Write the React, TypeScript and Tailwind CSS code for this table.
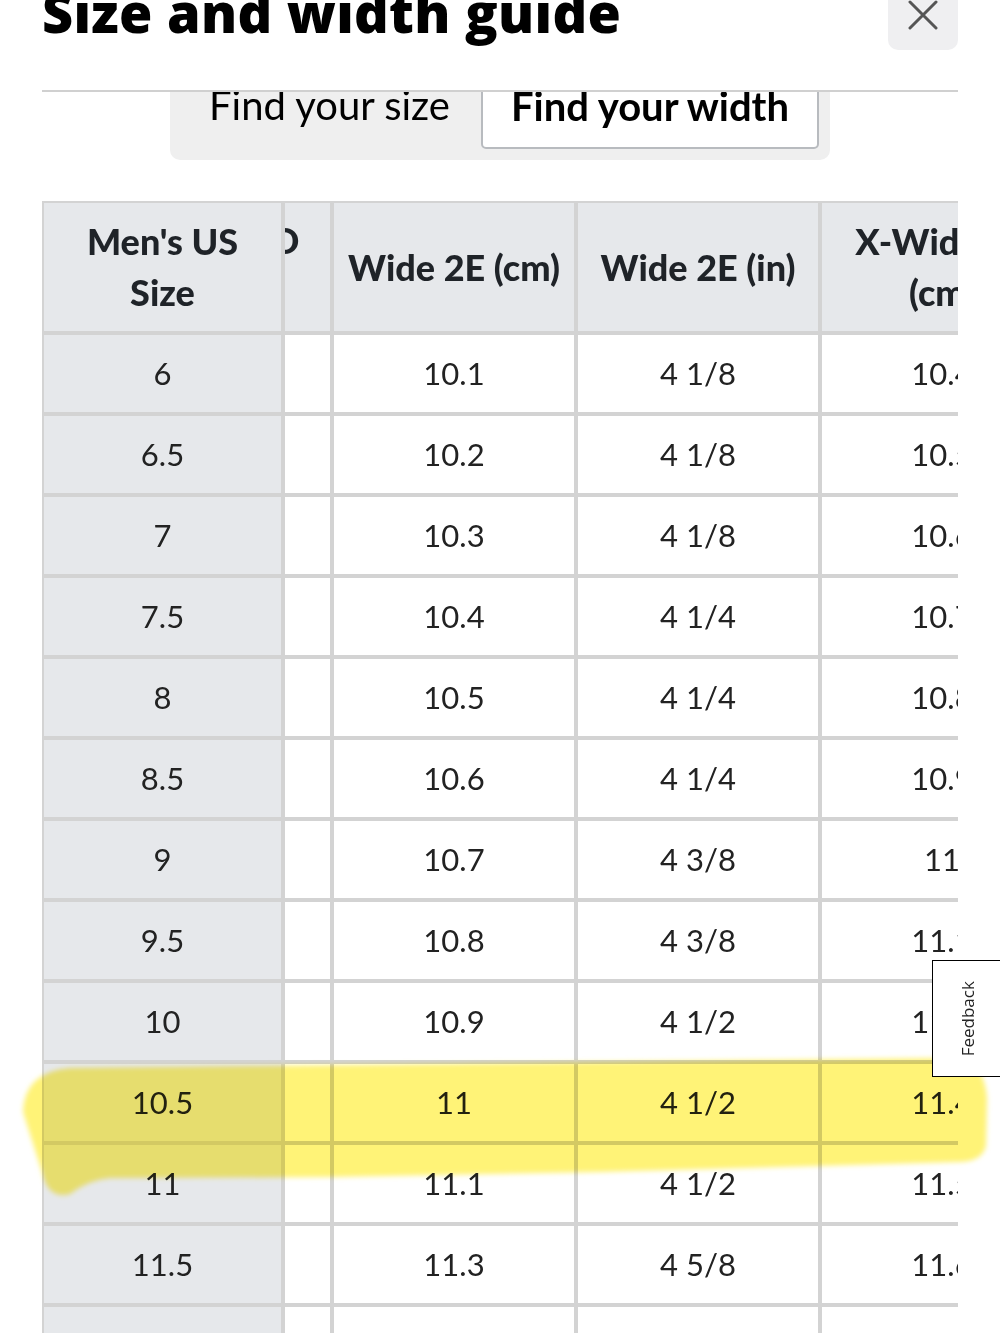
import React from "react";

const rows: [string, string, string, string][] = [
  ["6", "10.1", "4 1/8", "10.4"],
  ["6.5", "10.2", "4 1/8", "10.5"],
  ["7", "10.3", "4 1/8", "10.6"],
  ["7.5", "10.4", "4 1/4", "10.7"],
  ["8", "10.5", "4 1/4", "10.8"],
  ["8.5", "10.6", "4 1/4", "10.9"],
  ["9", "10.7", "4 3/8", "11"],
  ["9.5", "10.8", "4 3/8", "11.1"],
  ["10", "10.9", "4 1/2", "11.2"],
  ["10.5", "11", "4 1/2", "11.4"],
  ["11", "11.1", "4 1/2", "11.5"],
  ["11.5", "11.3", "4 5/8", "11.6"],
  ["12", "11.4", "4 5/8", "11.7"],
];

const font = { fontFamily: "Lato, 'Open Sans', sans-serif" };

export default function App() {
  return (
    <div className="relative w-[1000px] h-[1333px] overflow-hidden bg-white text-[#222]" style={font}>
      {/* Header */}
      <div className="mx-[42px] h-[92px] border-b-2 border-[#d0d0d0] flex justify-between items-start">
        <h1
          className="text-[54px] font-extrabold leading-none mt-[-15px] tracking-[0.3px] text-black whitespace-nowrap"
          style={{ fontFamily: "'Open Sans', Lato, sans-serif" }}
        >
          Size and width guide
        </h1>
        <button className="w-[70px] h-[70px] mt-[-20px] rounded-[10px] bg-[#efeff1] flex items-end justify-center pb-[19px]">
          <svg width="32" height="32" viewBox="0 0 32 32" fill="none" stroke="#555" strokeWidth="3" strokeLinecap="round">
            <path d="M3 3 L29 29 M29 3 L3 29" />
          </svg>
        </button>
      </div>

      {/* Tabs */}
      <div className="h-[68px] overflow-hidden flex justify-center items-end">
        <div className="flex items-end gap-[3px] bg-[#efefef] rounded-b-[10px] px-[11px] pb-[11px] w-[660px]">
          <div className="w-[297px] h-[90px] flex items-end justify-center pb-[24px] text-[40px] leading-none text-black">
            Find your size
          </div>
          <div className="w-[338px] h-[90px] flex items-end justify-center pb-[21px] bg-white border-2 border-[#b8bbbf] rounded-b-[5px] text-[40px] leading-none font-bold text-black">
            Find your width
          </div>
        </div>
      </div>

      {/* Table */}
      <div className="ml-[42px] mt-[41px] w-[916px] overflow-hidden">
        <div className="grid grid-cols-[237px_45px_240px_240px_240px] gap-[4px] bg-[#d3d3d3] pl-[2px] pt-[2px] w-max text-[31px]">
          {/* header */}
          <div className="h-[128px] bg-[#e6e8eb] flex items-center justify-center text-center text-[36px] font-black leading-[51px] text-[#1f2328]">
            <span>Men's US<br />Size</span>
          </div>
          <div className="h-[128px] bg-[#e6e8eb] overflow-hidden relative">
            <span className="absolute left-[-13px] top-[12px] text-[36px] font-black leading-[51px] text-[#1f2328]">D</span>
          </div>
          <div className="h-[128px] bg-[#e6e8eb] flex items-center justify-center text-[36px] font-black text-[#1f2328] whitespace-nowrap">Wide 2E (cm)</div>
          <div className="h-[128px] bg-[#e6e8eb] flex items-center justify-center text-[36px] font-black text-[#1f2328] whitespace-nowrap">Wide 2E (in)</div>
          <div className="h-[128px] bg-[#e6e8eb] flex items-center justify-center text-center text-[36px] font-black leading-[51px] text-[#1f2328]">
            <span>X-Wide 4E<br />(cm)</span>
          </div>
          {rows.map((r) => (
            <React.Fragment key={r[0]}>
              <div className="h-[77px] bg-[#e6e8eb] flex items-center justify-center">{r[0]}</div>
              <div className="h-[77px] bg-white" />
              <div className="h-[77px] bg-white flex items-center justify-center">{r[1]}</div>
              <div className="h-[77px] bg-white flex items-center justify-center">{r[2]}</div>
              <div className="h-[77px] bg-white flex items-center justify-center">{r[3]}</div>
            </React.Fragment>
          ))}
        </div>
      </div>

      {/* Highlighter stroke */}
      <svg className="absolute left-0 top-0 pointer-events-none mix-blend-multiply" width="1000" height="1333" viewBox="0 0 1000 1333">
        <defs>
          <filter id="soft" x="-5%" y="-50%" width="110%" height="200%">
            <feGaussianBlur stdDeviation="2.5" />
          </filter>
        </defs>
        <path
          d="M70 1068 L955 1058 Q984 1060 987 1098 L986 1146 Q982 1162 958 1162 L600 1172 L330 1177 L110 1178 Q88 1180 70 1194 Q48 1200 42 1172 L23 1112 Q24 1072 70 1068 Z"
          fill="#fff377"
          filter="url(#soft)"
        />
      </svg>

      {/* Feedback tab */}
      <div className="absolute left-[932px] top-[960px] w-[90px] h-[117px] bg-white border border-black flex items-center justify-start pl-[23px]">
        <span className="block -rotate-90 origin-center text-[17px] text-[#222] whitespace-nowrap translate-x-[-26px]" style={{ fontFamily: "'Open Sans', sans-serif" }}>
          Feedback
        </span>
      </div>
    </div>
  );
}
